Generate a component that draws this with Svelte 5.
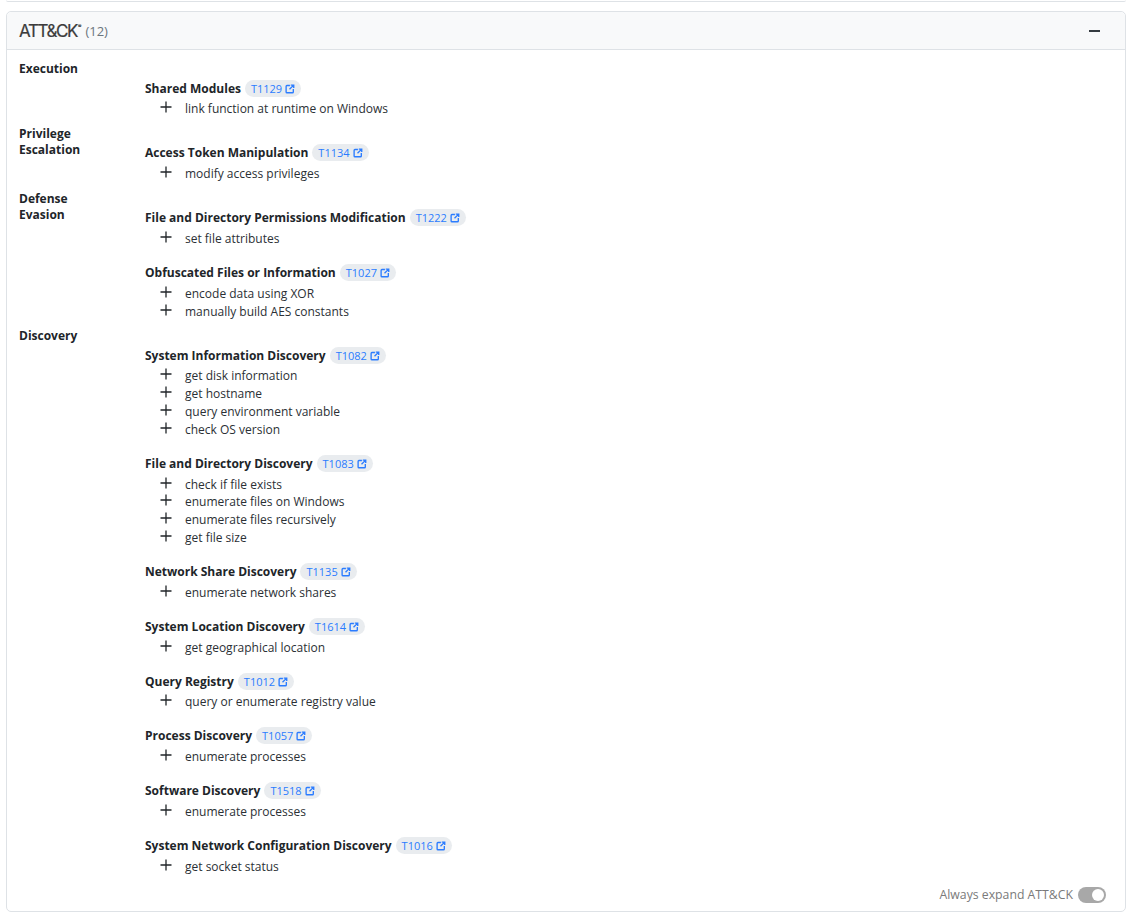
<script>
	const ext = 'M7 3H3.5A1 1 0 0 0 2.500 4v6.500a1 1 0 0 0 1 1H10a1 1 0 0 0 1-1V7M8 2.500h3.500V6M11.500 2.500 6.500 7.500';

	const tactics = [
		{
			name: ['Execution'],
			techniques: [{ name: 'Shared Modules', id: 'T1129', items: ['link function at runtime on Windows'] }]
		},
		{
			name: ['Privilege', 'Escalation'],
			techniques: [{ name: 'Access Token Manipulation', id: 'T1134', items: ['modify access privileges'] }]
		},
		{
			name: ['Defense', 'Evasion'],
			techniques: [
				{ name: 'File and Directory Permissions Modification', id: 'T1222', items: ['set file attributes'] },
				{
					name: 'Obfuscated Files or Information',
					id: 'T1027',
					items: ['encode data using XOR', 'manually build AES constants']
				}
			]
		},
		{
			name: ['Discovery'],
			techniques: [
				{
					name: 'System Information Discovery',
					id: 'T1082',
					items: ['get disk information', 'get hostname', 'query environment variable', 'check OS version']
				},
				{
					name: 'File and Directory Discovery',
					id: 'T1083',
					items: ['check if file exists', 'enumerate files on Windows', 'enumerate files recursively', 'get file size']
				},
				{ name: 'Network Share Discovery', id: 'T1135', items: ['enumerate network shares'] },
				{ name: 'System Location Discovery', id: 'T1614', items: ['get geographical location'] },
				{ name: 'Query Registry', id: 'T1012', items: ['query or enumerate registry value'] },
				{ name: 'Process Discovery', id: 'T1057', items: ['enumerate processes'] },
				{ name: 'Software Discovery', id: 'T1518', items: ['enumerate processes'] },
				{ name: 'System Network Configuration Discovery', id: 'T1016', items: ['get socket status'] }
			]
		}
	];
</script>

<div class="page">
	<div class="prev"></div>
	<section class="card">
		<header>
			<div class="title">
				<span class="logo">ATT&amp;CK<sup>®</sup></span>
				<span class="count">(12)</span>
			</div>
			<span class="collapse"></span>
		</header>
		<div class="body">
			{#each tactics as tactic}
				<div class="tactic">
					<div class="tactic-name">
						{#each tactic.name as line}
							<div>{line}</div>
						{/each}
					</div>
					<div class="techniques">
						{#each tactic.techniques as t}
							<div class="technique">
								<div class="tech-head">
									<b>{t.name}</b>
									<a class="tag" href="#top">
										{t.id}
										<svg width="11" height="11" viewBox="0 0 13 13" fill="none" stroke="currentColor" stroke-width="1.600">
											<path d={ext} />
										</svg>
									</a>
								</div>
								{#each t.items as item}
									<div class="item">
										<svg class="plus" width="12" height="12" viewBox="0 0 12 12" stroke="#212529" stroke-width="1.300">
											<path d="M6 .5v11M.5 6h11" />
										</svg>
										<span>{item}</span>
									</div>
								{/each}
							</div>
						{/each}
					</div>
				</div>
			{/each}
			<div class="foot">
				<span>Always expand ATT&amp;CK</span>
				<span class="switch"><i></i></span>
			</div>
		</div>
	</section>
</div>

<style>
	:global(body) {
		margin: 0;
		background: #fff;
	}
	.page {
		height: 915px;
		overflow: hidden;
		font-family: "Open Sans", "Liberation Sans", sans-serif;
		font-size: 12px;
		color: #212529;
		padding: 0 5px 0 6px;
		box-sizing: border-box;
	}
	.prev {
		height: 1px;
		border-bottom: 1px solid #dee2e6;
		border-radius: 0 0 5px 5px;
		margin-bottom: 9px;
	}
	.card {
		height: 901px;
		box-sizing: border-box;
		border: 1px solid #dee2e6;
		border-radius: 5px;
		display: flex;
		flex-direction: column;
	}
	header {
		height: 37px;
		flex: none;
		background: #f8f9fa;
		border-bottom: 1px solid #dee2e6;
		border-radius: 5px 5px 0 0;
		display: flex;
		align-items: center;
		justify-content: space-between;
		padding: 0 25px 0 12px;
	}
	.title {
		display: flex;
		align-items: center;
		gap: 4px;
	}
	.logo {
		font-family: Inter, sans-serif;
		font-size: 17px;
		letter-spacing: -1.4px;
		color: #3c3c3c;
		font-weight: 400;
		-webkit-text-stroke: 0.2px #3c3c3c;
	}
	.logo sup {
		font-size: 5px;
		vertical-align: 9px;
		line-height: 0;
		letter-spacing: 0;
		margin-left: 1px;
	}
	.count {
		font-size: 13px;
		font-weight: 500;
		color: #6c757d;
	}
	.collapse {
		width: 11px;
		height: 2px;
		background: #343a40;
	}
	.body {
		flex: 1;
		position: relative;
		padding: 11px 12px 0;
	}
	.tactic {
		display: grid;
		grid-template-columns: 126px 1fr;
		margin-bottom: 8.3px;
	}
	.tactic-name {
		font-weight: 700;
		line-height: 16px;
		color: #212529;
	}
	.techniques {
		padding-top: 18px;
		display: flex;
		flex-direction: column;
		gap: 16.2px;
	}
	.tech-head {
		display: flex;
		align-items: center;
		gap: 4px;
		height: 18px;
		margin-bottom: 2.8px;
	}
	.tech-head b {
		font-weight: 700;
	}
	.tag {
		display: inline-flex;
		align-items: center;
		gap: 2px;
		height: 17px;
		padding: 0 6px;
		border-radius: 9px;
		background: #e9ecef;
		color: #2b7cff;
		font-size: 11px;
		text-decoration: none;
	}
	.item {
		display: flex;
		align-items: center;
		height: 17.8px;
		padding-left: 15px;
		color: #2b3035;
	}
	.plus {
		margin-top: -3px;
		margin-right: 13px;
	}
	.foot {
		position: absolute;
		right: 19px;
		bottom: 8px;
		display: flex;
		align-items: center;
		gap: 5px;
		font-size: 12.25px;
		color: #7a7a7a;
	}
	.switch {
		width: 28px;
		height: 16px;
		border-radius: 8px;
		background: #a8a8a8;
		position: relative;
	}
	.switch i {
		position: absolute;
		right: 2px;
		top: 2px;
		width: 12px;
		height: 12px;
		border-radius: 50%;
		background: #fff;
	}
</style>
